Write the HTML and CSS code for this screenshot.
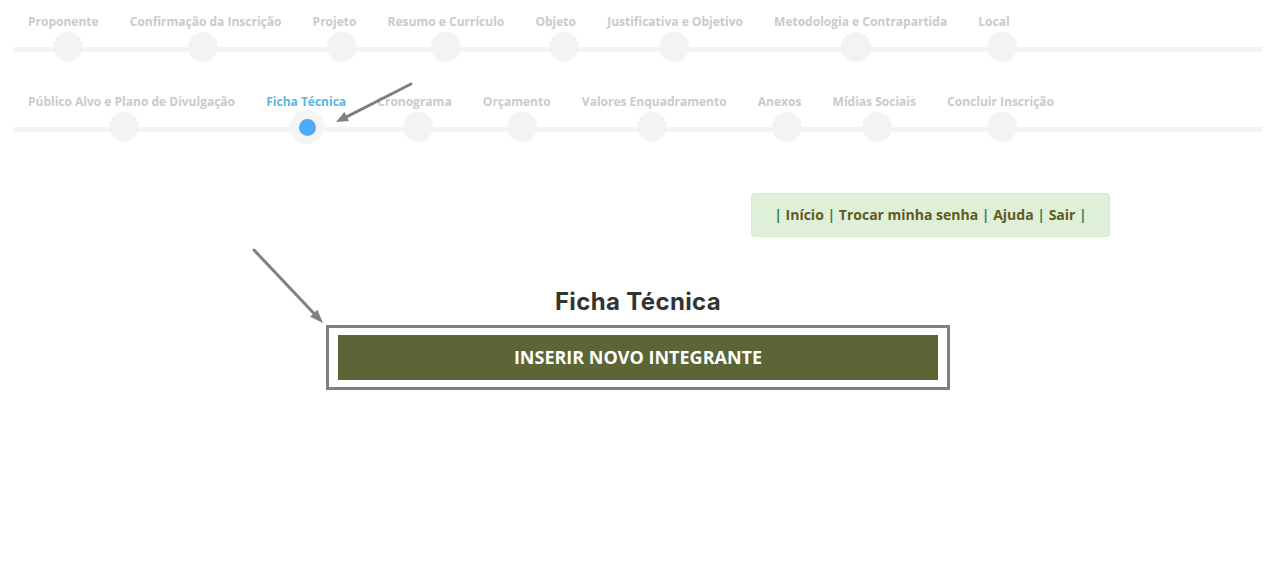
FILE: index.html
```html
<!DOCTYPE html>
<html lang="pt-BR">
<head>
<meta charset="utf-8">
<title>Ficha Técnica</title>
<link rel="stylesheet" href="styles.css">
</head>
<body>
<div class="page">
  <nav class="wizard">
    <ul class="steps">
      <li class="step"><span class="step-label">Proponente</span><span class="dot"></span></li>
      <li class="step"><span class="step-label">Confirmação da Inscrição</span><span class="dot"></span></li>
      <li class="step"><span class="step-label">Projeto</span><span class="dot"></span></li>
      <li class="step"><span class="step-label">Resumo e Currículo</span><span class="dot"></span></li>
      <li class="step"><span class="step-label">Objeto</span><span class="dot"></span></li>
      <li class="step"><span class="step-label">Justificativa e Objetivo</span><span class="dot"></span></li>
      <li class="step"><span class="step-label">Metodologia e Contrapartida</span><span class="dot"></span></li>
      <li class="step"><span class="step-label">Local</span><span class="dot"></span></li>
    </ul>
    <ul class="steps steps-second">
      <li class="step"><span class="step-label">Público Alvo e Plano de Divulgação</span><span class="dot"></span></li>
      <li class="step step-active"><span class="step-label">Ficha Técnica</span><span class="dot"><span class="dot-core"></span></span></li>
      <li class="step"><span class="step-label">Cronograma</span><span class="dot"></span></li>
      <li class="step"><span class="step-label">Orçamento</span><span class="dot"></span></li>
      <li class="step"><span class="step-label">Valores Enquadramento</span><span class="dot"></span></li>
      <li class="step"><span class="step-label">Anexos</span><span class="dot"></span></li>
      <li class="step"><span class="step-label">Mídias Sociais</span><span class="dot"></span></li>
      <li class="step"><span class="step-label">Concluir Inscrição</span><span class="dot"></span></li>
    </ul>
  </nav>

  <div class="toolbar">
    <div class="user-menu">
      <span class="sep">|</span> <a href="#">Início</a> <span class="sep">|</span> <a href="#">Trocar minha senha</a> <span class="sep">|</span> <a href="#">Ajuda</a> <span class="sep">|</span> <a href="#">Sair</a> <span class="sep">|</span>
    </div>
  </div>

  <main class="content">
    <h2 class="title">Ficha Técnica</h2>
    <div class="highlight">
      <button class="btn-insert" type="button">INSERIR NOVO INTEGRANTE</button>
    </div>
  </main>

  <svg class="annotations" width="1274" height="579" viewBox="0 0 1274 579" aria-hidden="true">
    <line x1="411" y1="84" x2="347" y2="116.6" stroke="#808080" stroke-width="3" stroke-linecap="round"/>
    <polygon points="336,122 349,121.1 344.4,112.1" fill="#808080"/>
    <line x1="254" y1="250" x2="314" y2="313.5" stroke="#808080" stroke-width="3" stroke-linecap="round"/>
    <polygon points="323,323 310.1,316.7 317.4,309.8" fill="#808080"/>
  </svg>
</div>
</body>
</html>
```

FILE: styles.css
```css
html, body {
  margin: 0;
  padding: 0;
  background: #ffffff;
}

.page {
  position: relative;
  width: 1274px;
  min-height: 579px;
  font-family: "Open Sans", "Liberation Sans", sans-serif;
}

.wizard {
  display: flex;
  flex-direction: column;
}

.steps {
  display: flex;
  margin: 0;
  padding: 14px 0 0 12.4px;
  height: 80px;
  box-sizing: border-box;
  list-style: none;
  background: linear-gradient(#f3f3f3, #f3f3f3) no-repeat;
  background-position: 13px 47px;
  background-size: calc(100% - 25px) 5px;
}

.step {
  display: flex;
  flex-direction: column;
  align-items: center;
  padding: 0 15.6px;
}

.step-label {
  font-size: 12px;
  line-height: 16px;
  font-weight: 700;
  color: #cacaca;
  white-space: nowrap;
}

.dot {
  display: flex;
  align-items: center;
  justify-content: center;
  width: 30px;
  height: 30px;
  margin-top: 2px;
  border-radius: 50%;
  background: #f3f3f3;
  transform: translateX(var(--dx, 0px));
}

.step-active .step-label {
  color: #5ab6e0;
}

.step-active .dot {
  width: 34px;
  height: 34px;
  margin-top: 0;
  background: #f5f5f5;
}

.dot-core {
  width: 17px;
  height: 17px;
  border-radius: 50%;
  background: #4aacfa;
}

.steps .step:nth-child(1) { --dx: 5px; }
.steps .step:nth-child(2) { --dx: -3px; }
.steps .step:nth-child(3) { --dx: 7px; }
.steps .step:nth-child(4) { --dx: 0px; }
.steps .step:nth-child(5) { --dx: 8px; }
.steps .step:nth-child(6) { --dx: -1px; }
.steps .step:nth-child(7) { --dx: -5px; }
.steps .step:nth-child(8) { --dx: 8px; }

.steps-second .step:nth-child(1) { --dx: -8px; }
.steps-second .step:nth-child(2) { --dx: 1px; }
.steps-second .step:nth-child(3) { --dx: 4px; }
.steps-second .step:nth-child(4) { --dx: 5px; }
.steps-second .step:nth-child(5) { --dx: -2px; }
.steps-second .step:nth-child(6) { --dx: 7px; }
.steps-second .step:nth-child(7) { --dx: 3px; }
.steps-second .step:nth-child(8) { --dx: 1px; }

.toolbar {
  display: flex;
  justify-content: flex-end;
  padding: 33px 164px 0 0;
}

.user-menu {
  box-sizing: border-box;
  width: 359px;
  padding: 11px 0;
  text-align: center;
  font-size: 14px;
  line-height: 20px;
  font-weight: 700;
  background: #dff0d8;
  border: 1px solid #d6e9c6;
  border-radius: 4px;
}

.user-menu a {
  color: #5e5a23;
  text-decoration: none;
}

.user-menu .sep {
  color: #3f7c62;
  font-weight: 700;
}

.content {
  display: flex;
  flex-direction: column;
  align-items: center;
  padding-top: 50px;
  padding-left: 2px;
}

.title {
  margin: 0 0 8px;
  font-family: "Inter", "Open Sans", sans-serif;
  font-size: 24px;
  line-height: 30px;
  font-weight: 700;
  letter-spacing: 0.35px;
  color: #333333;
}

.highlight {
  padding: 7px 9px;
  border: 3px solid #808080;
}

.btn-insert {
  display: block;
  width: 600px;
  height: 45px;
  margin: 0;
  padding: 0;
  border: 0;
  background: #5c6535;
  color: #ffffff;
  font-family: "Open Sans", "Liberation Sans", sans-serif;
  font-size: 18px;
  font-weight: 700;
  line-height: 45px;
  cursor: pointer;
}

.annotations {
  position: absolute;
  top: 0;
  left: 0;
  pointer-events: none;
}
```
